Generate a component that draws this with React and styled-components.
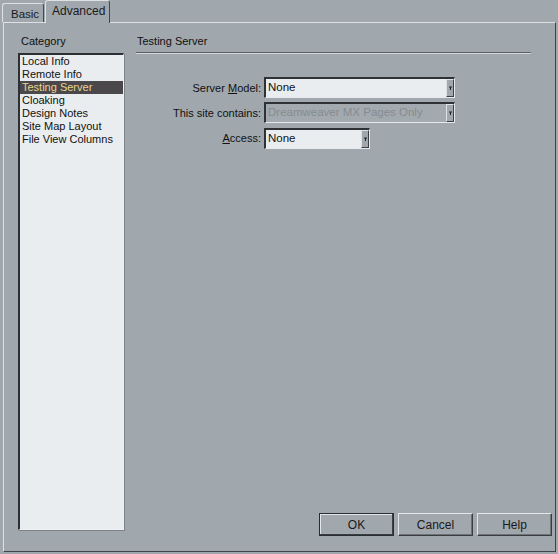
import React from "react";
import styled, { createGlobalStyle } from "styled-components";

const Global = createGlobalStyle`
  html, body { margin: 0; padding: 0; background: #a0a7ad; }
  body { font-family: "Liberation Sans", Arial, sans-serif; font-size: 11px; color: #111; }
`;

const Window = styled.div`
  width: 558px;
  height: 554px;
  background: #a0a7ad;
  display: flex;
  flex-direction: column;
  box-sizing: border-box;
  overflow: hidden;
`;

const TabStrip = styled.div`
  display: flex;
  align-items: flex-end;
  height: 22px;
  padding-left: 2px;
  gap: 1px;
  position: relative;
  z-index: 1;
`;

const Tab = styled.div`
  box-sizing: border-box;
  width: ${p => p.$w}px;
  padding: ${p => (p.$active ? "3px 0 0 6px" : "3px 0 0 8px")};
  border-top: 1px solid #dde1e4;
  border-left: 1px solid #dde1e4;
  border-right: 1px solid #44484c;
  border-radius: 3px 3px 0 0;
  line-height: 14px;
  font-size: ${p => (p.$active ? "12px" : "11.5px")};
  color: #1a1a1a;
  background: #a0a7ad;
  margin-bottom: ${p => (p.$active ? "-1px" : "0")};
  height: ${p => (p.$active ? "23px" : "19px")};
`;

const Panel = styled.div`
  flex: 1;
  margin: 0 2px 2px 3px;
  border-top: 1px solid #dde1e4;
  border-left: 1px solid #dde1e4;
  border-right: 1px solid #404448;
  border-bottom: 1px solid #404448;
  display: grid;
  grid-template-columns: 132px 1fr;
  padding: 12px 3px 15px 0;
`;

const Sidebar = styled.div`
  display: flex;
  flex-direction: column;
  padding-left: 14px;
`;

const Caption = styled.div`
  line-height: 13px;
  padding-left: ${p => p.$indent || 0}px;
  color: #111;
`;

const List = styled.div`
  margin-top: 5px;
  width: 106px;
  height: 477px;
  box-sizing: border-box;
  background: #e9edef;
  border-top: 2px solid #2c3034;
  border-left: 2px solid #2c3034;
  border-right: 1px solid #eef1f3;
  border-bottom: 1px solid #eef1f3;
  box-shadow: 1px 1px 0 #7c8287;
`;

const Item = styled.div`
  height: 13px;
  line-height: 13px;
  padding-left: 2px;
  white-space: nowrap;
  background: ${p => (p.$selected ? "#4b484c" : "transparent")};
  color: ${p => (p.$selected ? "#e6d68e" : "#111")};
`;

const Main = styled.div`
  display: flex;
  flex-direction: column;
`;

const Rule = styled.div`
  margin: 4px 21px 0 0;
  height: 1px;
  background: #5d6267;
  border-bottom: 1px solid #d2d7da;
`;

const Form = styled.div`
  margin-top: 23px;
  display: grid;
  grid-template-columns: 125px auto;
  column-gap: 3px;
  row-gap: 4px;
  align-items: center;
  justify-items: start;
`;

const Label = styled.label`
  justify-self: end;
  white-space: nowrap;
  color: #111;
  u { text-decoration: underline; }
`;

const Select = styled.div`
  box-sizing: border-box;
  width: ${p => p.$w}px;
  height: 21px;
  display: flex;
  align-items: stretch;
  background: ${p => (p.$disabled ? "#a3aaaf" : "#e9edef")};
  border-top: 2px solid #2e3236;
  border-left: 2px solid #2e3236;
  border-right: 1px solid #e6eaec;
  border-bottom: 1px solid #e6eaec;
  margin-top: ${p => p.$mt || 0}px;
`;

const Value = styled.span`
  flex: 1;
  padding-left: 2px;
  line-height: 17px;
  font-size: 11.5px;
  color: ${p => (p.$disabled ? "#858b90" : "#111")};
  white-space: nowrap;
  overflow: hidden;
`;

const Arrow = styled.span`
  width: 8px;
  box-sizing: border-box;
  background: #a0a7ad;
  border-left: 1px solid #dfe3e5;
  border-top: 1px solid #dfe3e5;
  border-right: 1px solid #3c4044;
  border-bottom: 1px solid #3c4044;
  display: flex;
  align-items: center;
  justify-content: center;
`;

const ButtonRow = styled.div`
  margin-top: auto;
  display: flex;
  justify-content: flex-end;
  gap: 4px;
`;

const Button = styled.div`
  box-sizing: border-box;
  width: 75px;
  height: 23px;
  display: flex;
  align-items: center;
  justify-content: center;
  font-size: 12px;
  color: #1a1a1a;
  background: #a0a7ad;
  border-top: 1px solid #e2e6e8;
  border-left: 1px solid #e2e6e8;
  border-right: 1px solid #3a3e42;
  border-bottom: 1px solid #3a3e42;
  outline: ${p => (p.$default ? "1px solid #2a2e32" : "none")};
  outline-offset: ${p => (p.$default ? "-1px" : "0")};
  box-shadow: ${p => (p.$default ? "inset -1px -1px 0 #3a3e42, inset 1px 1px 0 #e2e6e8" : "inset -1px -1px 0 #6c7276")};
`;

const DownTick = () => (
  <svg width="3" height="4" viewBox="0 0 3 4">
    <path d="M0 1h3M1.5 1v3" stroke="#222" strokeWidth="1" />
  </svg>
);

const Dropdown = ({ w, value, disabled, mt }) => (
  <Select $w={w} $disabled={disabled} $mt={mt}>
    <Value $disabled={disabled}>{value}</Value>
    <Arrow>
      <DownTick />
    </Arrow>
  </Select>
);

const categories = [
  "Local Info",
  "Remote Info",
  "Testing Server",
  "Cloaking",
  "Design Notes",
  "Site Map Layout",
  "File View Columns",
];

export default function App() {
  return (
    <>
      <Global />
      <Window>
        <TabStrip>
          <Tab $w={42}>Basic</Tab>
          <Tab $w={65} $active>Advanced</Tab>
        </TabStrip>
        <Panel>
          <Sidebar>
            <Caption $indent={3}>Category</Caption>
            <List>
              {categories.map(c => (
                <Item key={c} $selected={c === "Testing Server"}>{c}</Item>
              ))}
            </List>
          </Sidebar>
          <Main>
            <Caption $indent={1}>Testing Server</Caption>
            <Rule />
            <Form>
              <Label>Server <u>M</u>odel:</Label>
              <Dropdown w={191} value="None" />
              <Label>This site contains:</Label>
              <Dropdown w={191} value="Dreamweaver MX Pages Only" disabled />
              <Label><u>A</u>ccess:</Label>
              <Dropdown w={106} value="None" mt={1} />
            </Form>
            <ButtonRow>
              <Button $default>OK</Button>
              <Button>Cancel</Button>
              <Button>Help</Button>
            </ButtonRow>
          </Main>
        </Panel>
      </Window>
    </>
  );
}
